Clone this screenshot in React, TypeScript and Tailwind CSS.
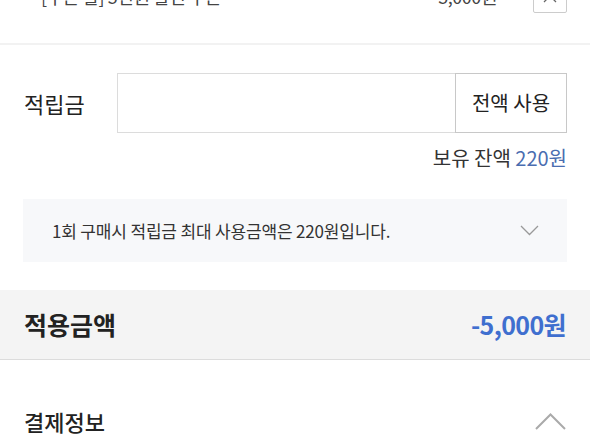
export default function App() {
  return (
    <div
      className="w-[590px] h-[443px] overflow-hidden bg-white text-[#222]"
      style={{ fontFamily: '"Noto Sans CJK KR", "Noto Sans", sans-serif' }}
    >
      {/* coupon row (partly scrolled off) */}
      <div className="px-[23px]">
        <div className="-mt-[22px] flex h-[36px] items-center">
          <div className="flex flex-1 items-center pl-[18px] text-[18px] tracking-tight text-[#444]">
            <span>[쿠폰 할] 5천원 할인 쿠폰</span>
            <svg className="ml-[12px]" width="11" height="7" viewBox="0 0 11 7" fill="none">
              <polyline points="1,1 5.5,5.5 10,1" stroke="#aaa" strokeWidth="1.2" />
            </svg>
          </div>
          <span className="mr-[36px] text-[18px] tracking-tight text-[#444]">5,000원</span>
          <button className="flex h-[34px] w-[34px] items-center justify-center rounded-[2px] border border-[#ccc] bg-white">
            <svg width="16" height="16" viewBox="0 0 16 16" fill="none">
              <path d="M2 2 L14 14 M14 2 L2 14" stroke="#666" strokeWidth="1.3" />
            </svg>
          </button>
        </div>
      </div>
      <div className="mt-[29px] h-[2px] bg-[#f2f2f2]" />

      {/* points */}
      <div className="px-[23px]">
        <div className="mt-[28px] flex h-[60px] items-stretch">
          <div className="flex w-[94px] items-center pl-px text-[22px]">적립금</div>
          <div className="flex-1 border border-r-0 border-[#dcdcdc] bg-white" />
          <button className="w-[112px] border border-[#c8c8c8] bg-white text-[20px] text-[#222]">
            전액 사용
          </button>
        </div>
        <div className="mt-[11px] text-right text-[20px] leading-[28px] text-[#333]">
          보유 잔액 <span className="text-[#4a6db0]">220원</span>
        </div>

        <div className="mt-[27px] flex h-[63px] items-center justify-between bg-[#f7f8fa] pl-[29px] pr-[28px]">
          <span className="text-[17px] tracking-[-0.01em] text-[#333]">
            1회 구매시 적립금 최대 사용금액은 220원입니다.
          </span>
          <svg width="19" height="11" viewBox="0 0 19 11" fill="none">
            <polyline points="1,1 9.5,9.5 18,1" stroke="#999" strokeWidth="1.3" />
          </svg>
        </div>
      </div>

      {/* applied amount */}
      <div className="mt-[28px] flex h-[70px] items-center justify-between border-b border-[#dcdcdc] bg-[#f4f4f4] px-[24px]">
        <span className="text-[25px] font-bold">적용금액</span>
        <span className="text-[25px] font-bold tracking-tight text-[#3f6fcf]">-5,000원</span>
      </div>

      {/* payment info */}
      <div className="mt-[48px] flex h-[26px] items-center justify-between px-[24px]">
        <span className="text-[22px] font-medium">결제정보</span>
        <svg width="31" height="17" viewBox="0 0 31 17" fill="none">
          <polyline points="1,16 15.5,1.5 30,16" stroke="#aaa" strokeWidth="2" />
        </svg>
      </div>
    </div>
  )
}
